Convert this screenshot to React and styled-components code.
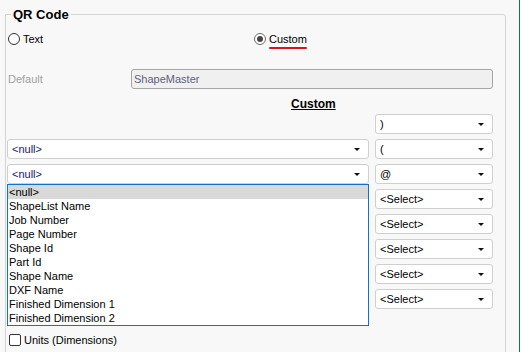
import React from "react";
import styled, { createGlobalStyle } from "styled-components";

const Global = createGlobalStyle`
  html, body {
    margin: 0;
    padding: 0;
    background: #f8f8f8;
  }
  body {
    font-family: "Liberation Sans", Arial, sans-serif;
    font-size: 11px;
    color: #000;
  }
`;

const Page = styled.div`
  width: 520px;
  height: 352px;
  border-right: 1px solid #0b7a3e;
  background: #f8f8f8;
  padding-top: 5px;
  box-sizing: border-box;
  overflow: hidden;
`;

const Group = styled.fieldset`
  margin: 0 0 0 5px;
  padding: 0;
  width: 501px;
  height: 400px;
  box-sizing: border-box;
  border: 1px solid #d4d4d4;
  border-radius: 0 3px 0 0;
  legend {
    margin-left: 5px;
    padding: 2px 2px 0;
    font-size: 13px;
    font-weight: bold;
    line-height: 16px;
  }
`;

const Body = styled.div`
  padding: 8px 0 0 1px;
  display: flex;
  flex-direction: column;
`;

const RadioRow = styled.div`
  display: grid;
  grid-template-columns: 246px auto;
  height: 16px;
  align-items: center;
  justify-items: start;
  padding-left: 1px;
`;

const RadioItem = styled.label`
  display: flex;
  align-items: center;
  gap: 3px;
  position: relative;
  width: max-content;
  span {
    line-height: 14px;
  }
`;

const Circle = styled.span`
  width: 12px;
  height: 12px;
  box-sizing: border-box;
  border-radius: 50%;
  border: 1px solid ${(p) => (p.$on ? "#6b6b6b" : "#333")};
  background: #fff;
  display: flex;
  align-items: center;
  justify-content: center;
  &::after {
    content: "";
    width: 6px;
    height: 6px;
    border-radius: 50%;
    background: #444;
    display: ${(p) => (p.$on ? "block" : "none")};
  }
`;

const Squiggle = styled.span`
  position: absolute;
  left: 15px;
  right: 0;
  bottom: -3px;
  height: 2px;
  background: #d4161c;
  border-radius: 1px;
`;

const DefaultRow = styled.div`
  display: flex;
  align-items: center;
  margin-top: 22px;
  padding-left: 1px;
  label {
    width: 123px;
    color: #a2a2a2;
  }
`;

const TextBox = styled.div`
  width: 362px;
  height: 20px;
  box-sizing: border-box;
  border: 1px solid #a6a6a6;
  border-radius: 3px;
  background: #f0f0f0;
  color: #5f5f80;
  padding: 0 2px;
  display: flex;
  align-items: center;
`;

const Heading = styled.div`
  margin-top: 8px;
  padding-left: 284px;
  font-weight: bold;
  font-size: 12px;
  text-decoration: underline;
  line-height: 14px;
`;

const Grid = styled.div`
  margin-top: 3px;
  display: grid;
  grid-template-columns: 362px 118px;
  grid-auto-rows: 20px;
  column-gap: 6px;
  row-gap: 5px;
`;

const Cell = styled.div`
  position: relative;
  grid-column: ${(p) => p.$col};
`;

const Select = styled.div`
  height: 20px;
  box-sizing: border-box;
  border: 1px solid #cfcfcf;
  border-radius: 3px;
  background: #fff;
  color: ${(p) => (p.$navy ? "#1c1c64" : "#000")};
  padding: 0 0 0 4px;
  display: flex;
  align-items: center;
  justify-content: space-between;
  &::after {
    content: "";
    margin-right: 8px;
    border-left: 3px solid transparent;
    border-right: 3px solid transparent;
    border-top: 3px solid #111;
  }
`;

const List = styled.ul`
  position: absolute;
  top: 20px;
  left: 0;
  width: 362px;
  margin: 0;
  padding: 0;
  list-style: none;
  box-sizing: border-box;
  border: 1px solid #0a74d0;
  background: #fff;
  z-index: 2;
`;

const ListItem = styled.li`
  height: 14px;
  line-height: 14px;
  padding-left: 1px;
  background: ${(p) => (p.$active ? "#d9d9d9" : "transparent")};
`;

const CheckRow = styled.label`
  margin-top: 24px;
  display: flex;
  align-items: center;
  gap: 3px;
  padding-left: 2px;
  height: 14px;
`;

const Box = styled.span`
  width: 12px;
  height: 12px;
  box-sizing: border-box;
  border: 1px solid #333;
  border-radius: 2px;
  background: #fff;
`;

const options = [
  "<null>",
  "ShapeList Name",
  "Job Number",
  "Page Number",
  "Shape Id",
  "Part Id",
  "Shape Name",
  "DXF Name",
  "Finished Dimension 1",
  "Finished Dimension 2",
];

const rows = [
  { left: null, right: ")" },
  { left: "<null>", right: "(" },
  { left: "<null>", right: "@", open: true },
  { left: null, right: "<Select>" },
  { left: null, right: "<Select>" },
  { left: null, right: "<Select>" },
  { left: null, right: "<Select>" },
  { left: null, right: "<Select>" },
];

export default function App() {
  return (
    <Page>
      <Global />
      <Group>
        <legend>QR Code</legend>
        <Body>
          <RadioRow>
            <RadioItem>
              <Circle />
              <span>Text</span>
            </RadioItem>
            <RadioItem>
              <Circle $on />
              <span>Custom</span>
              <Squiggle />
            </RadioItem>
          </RadioRow>

          <DefaultRow>
            <label>Default</label>
            <TextBox>ShapeMaster</TextBox>
          </DefaultRow>

          <Heading>Custom</Heading>

          <Grid>
            {rows.map((r, i) => (
              <React.Fragment key={i}>
                <Cell $col={1}>
                  {r.left && <Select $navy>{r.left}</Select>}
                  {r.open && (
                    <List>
                      {options.map((o, j) => (
                        <ListItem key={o} $active={j === 0}>
                          {o}
                        </ListItem>
                      ))}
                    </List>
                  )}
                </Cell>
                <Cell $col={2}>
                  <Select>{r.right}</Select>
                </Cell>
              </React.Fragment>
            ))}
          </Grid>

          <CheckRow>
            <Box />
            <span>Units (Dimensions)</span>
          </CheckRow>
        </Body>
      </Group>
    </Page>
  );
}
